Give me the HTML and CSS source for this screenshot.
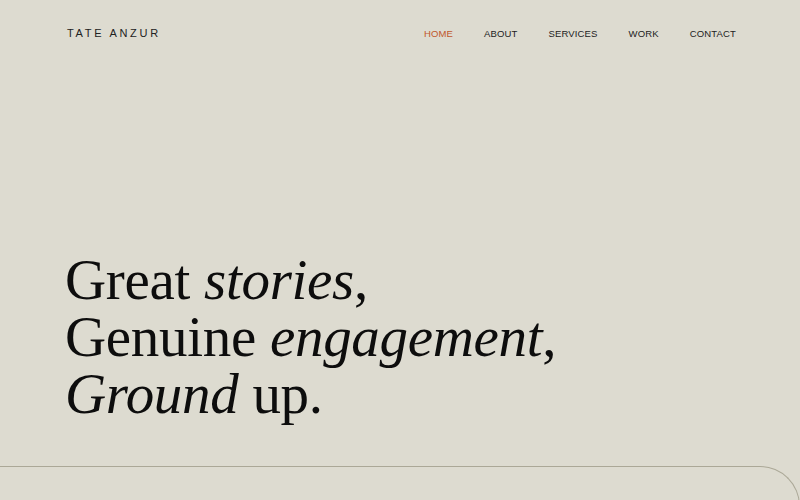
FILE: index.html
```html
<!DOCTYPE html>
<html lang="en">
  <head>
    <meta charset="UTF-8" />
    <meta name="viewport" content="width=device-width, initial-scale=1.0" />
    <title>Tate Anzur</title>
    <link rel="stylesheet" href="styles.css">
  </head>
  <body>
    <header class="site-header">
      <a class="logo" href="#">TATE ANZUR</a>
      <nav class="nav">
        <a class="nav-link active" href="#">HOME</a>
        <a class="nav-link" href="#">ABOUT</a>
        <a class="nav-link" href="#">SERVICES</a>
        <a class="nav-link" href="#">WORK</a>
        <a class="nav-link" href="#">CONTACT</a>
      </nav>
    </header>

    <main class="hero">
      <h1 class="hero-title">
        Great <em>stories</em>,<br />
        Genuine <em>engagement</em>,<br />
        <em>Ground</em> up.
      </h1>
    </main>

    <!-- next section peeks in at the bottom -->
    <section class="panel"></section>
  </body>
</html>
```

FILE: styles.css
```css
body {
  margin: 0;
  background-color: #dddbd0;
  color: #111;
  font-family: "Liberation Sans", Arial, sans-serif;
  overflow: hidden;
}
.site-header {
  display: flex;
  justify-content: space-between;
  align-items: center;
  height: 66px;
  padding: 0 64px 0 67px;
}
.logo {
  color: #222;
  text-decoration: none;
  font-size: 11px;
  letter-spacing: 2.7px;
}
.nav {
  display: flex;
  gap: 31px;
}
.nav-link {
  color: #222;
  text-decoration: none;
  font-size: 9.5px;
  letter-spacing: 0.15px;
}
.nav-link.active {
  color: #c0562c;
}
.hero {
  height: 400px;
  display: flex;
  align-items: flex-end;
  padding: 0 64px 0 65px;
  box-sizing: border-box;
}
.hero-title {
  margin: 0 0 44px;
  font-family: "Liberation Serif", "Times New Roman", serif;
  font-weight: normal;
  font-size: 57px;
  line-height: 57px;
  letter-spacing: -0.3px;
  color: #0d0d0d;
}
.hero-title em {
  font-style: italic;
}
.panel {
  height: 40px;
  border-top: 1.5px solid #aba897;
  border-right: 1.5px solid #aba897;
  border-top-right-radius: 40px;
}
```
